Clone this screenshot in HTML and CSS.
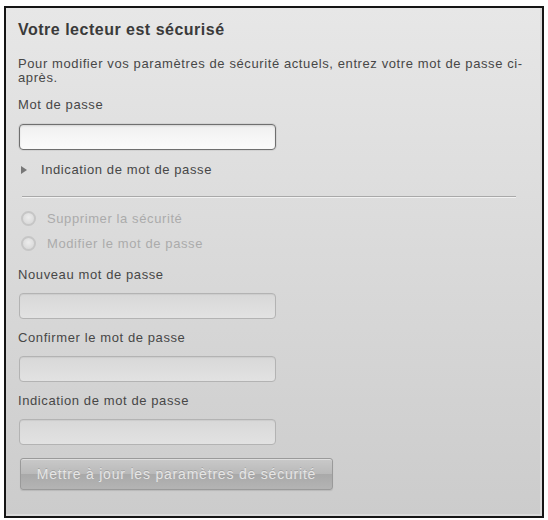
FILE: index.html
```html
<!DOCTYPE html>
<html lang="fr">
<head>
<meta charset="utf-8">
<title>Sécurité</title>
<link rel="stylesheet" href="styles.css">
</head>
<body>
<div class="frame">
  <div class="panel">
    <h1 class="title">Votre lecteur est sécurisé</h1>
    <p class="intro">Pour modifier vos paramètres de sécurité actuels, entrez votre mot de passe ci-après.</p>
    <div class="label l1">Mot de passe</div>
    <div class="field active"></div>
    <div class="hint-toggle"><span class="tri"></span>Indication de mot de passe</div>
    <div class="sep"></div>
    <div class="radio r1"><span class="dot"></span>Supprimer la sécurité</div>
    <div class="radio r2"><span class="dot"></span>Modifier le mot de passe</div>
    <div class="label l2">Nouveau mot de passe</div>
    <div class="field"></div>
    <div class="label l3">Confirmer le mot de passe</div>
    <div class="field"></div>
    <div class="label l3">Indication de mot de passe</div>
    <div class="field"></div>
    <div class="btn">Mettre à jour les paramètres de sécurité</div>
  </div>
</div>
</body>
</html>
```
FILE: styles.css
```css
html, body {
  margin: 0;
  padding: 0;
  background: #fff;
}
body {
  font-family: "Liberation Sans", Arial, sans-serif;
  font-size: 13px;
  letter-spacing: 0.6px;
  color: #474747;
}
.frame {
  margin: 6px 0 0 4px;
  width: 536px;
  height: 508px;
  border: 2px solid #151515;
}
.panel {
  height: 100%;
  box-sizing: border-box;
  padding: 13px 0 0 12px;
  background: linear-gradient(#e7e7e7, #cccccc);
  border-right: 2px solid #dadada;
  border-bottom: 2px solid #dadada;
}
.title {
  margin: 0;
  font-size: 16px;
  letter-spacing: 0.5px;
  font-weight: bold;
  color: #3a3a3a;
  line-height: 17px;
}
.intro {
  margin: 19px 0 0;
  line-height: 14px;
  width: 512px;
}
.label {
  line-height: 14px;
}
.l1 { margin-top: 13px; }
.l2 { margin-top: 17px; }
.l3 { margin-top: 12px; }
.field {
  margin: 11px 0 0 1px;
  width: 255px;
  height: 24px;
  border: 1px solid #b3b3b3;
  border-radius: 4px;
  background: linear-gradient(#d8d8d8, #e2e2e2);
  box-shadow: inset 0 1px 1px rgba(0,0,0,0.06);
}
.field.active {
  margin-top: 12px;
  border-color: #6f6f6f;
  background: linear-gradient(#f0f0f0, #fbfbfb);
  box-shadow: 0 0 0 1px rgba(0,0,0,0.06), inset 0 1px 2px rgba(0,0,0,0.12);
}
.hint-toggle {
  margin-top: 13px;
  line-height: 14px;
  display: flex;
  align-items: center;
}
.tri {
  width: 0;
  height: 0;
  margin: 0 14px 0 3px;
  border-left: 6px solid #777;
  border-top: 4px solid transparent;
  border-bottom: 4px solid transparent;
}
.sep {
  margin: 19px 0 0 4px;
  width: 494px;
  height: 1px;
  background: #a9a9a9;
  box-shadow: 0 1px 0 #f2f2f2;
}
.radio {
  display: flex;
  align-items: center;
  color: #ababab;
  line-height: 15px;
}
.r1 { margin-top: 14px; }
.r2 { margin-top: 10px; }
.dot {
  box-sizing: border-box;
  width: 15px;
  height: 15px;
  border-radius: 50%;
  border: 2px solid #c6c6c6;
  background: radial-gradient(circle at 50% 40%, #ececec, #d4d4d4);
  margin: 0 11px 0 3px;
}
.btn {
  margin: 13px 0 0 2px;
  width: 311px;
  height: 30px;
  border: 1px solid #9a9a9a;
  border-radius: 3px;
  background: linear-gradient(#c9c9c9, #b9b9b9 50%, #a9a9a9 51%, #b4b4b4);
  box-shadow: inset 0 1px 0 rgba(255,255,255,0.4), 0 1px 1px rgba(0,0,0,0.1);
  color: #e6e6e6;
  font-size: 14px;
  letter-spacing: 0.8px;
  line-height: 30px;
  text-align: center;
  text-shadow: 0 -1px 0 rgba(0,0,0,0.15);
}
```
